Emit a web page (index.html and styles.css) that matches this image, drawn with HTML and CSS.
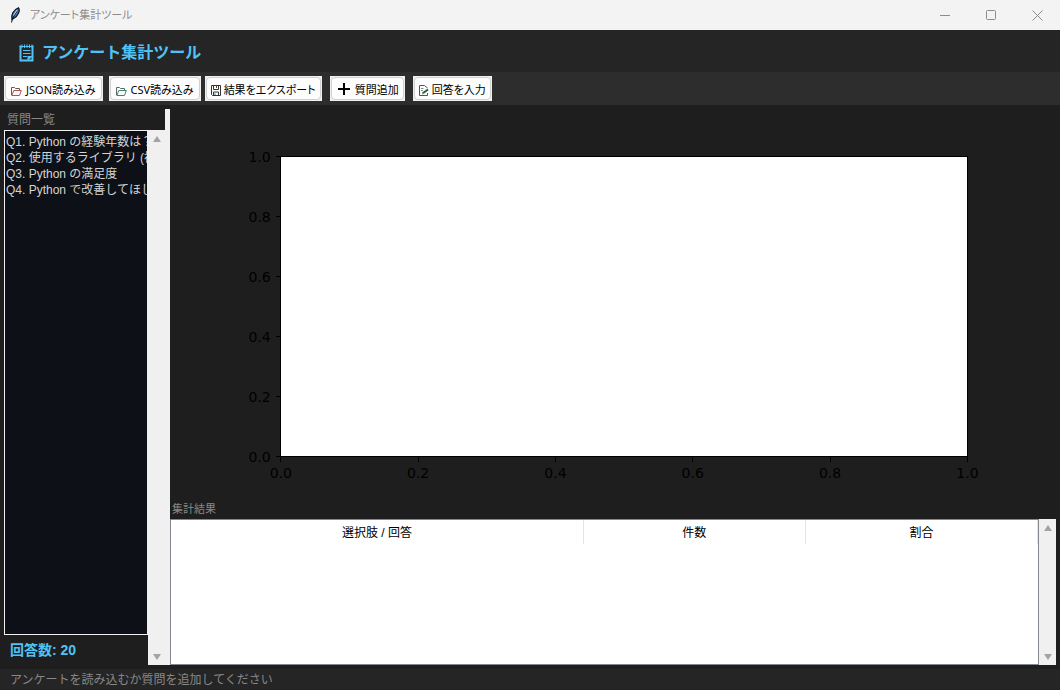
FILE: index.html
```
<!DOCTYPE html>
<html lang="ja">
  <head>
    <meta charset="UTF-8" />
    <meta name="viewport" content="width=device-width, initial-scale=1.0" />
    <title>アンケート集計ツール</title>
    <link rel="stylesheet" href="styles.css">
  </head>
  <body>
    <div class="titlebar">
        <svg class="app-icon" width="12" height="16" viewBox="0 0 12 16">
            <path d="M3 12.500C2 8 4 3 9.500 .8C11.500 3 9 9.500 4.500 11.500Z" fill="#3f7fc4" stroke="#111" stroke-width="1.2" />
            <path d="M2.500 15.500L3.500 11.500L8 4" fill="none" stroke="#111" stroke-width="1" />
            <path d="M4.500 8.500L8 3" stroke="#b9dcff" stroke-width="1" />
        </svg>
        <span class="window-title">アンケート集計ツール</span>
        <div class="window-buttons">
            <button type="button" aria-label="最小化"><svg width="11" height="11"><path d="M0 5.500H10" /></svg></button>
            <button type="button" aria-label="最大化"><svg width="11" height="11"><rect x=".5" y=".5" width="9" height="9" rx="1" /></svg></button>
            <button type="button" aria-label="閉じる"><svg width="11" height="11"><path d="M.5 .5L10.500 10.500M10.500 .5L.5 10.500" /></svg></button>
        </div>
    </div>

    <header class="header">
        <svg width="16" height="18" viewBox="0 0 16 18" fill="none" stroke="#4fc3f7">
            <path d="M2.500 1.500V16.500H14.500V1.500" stroke-width="2" />
            <path d="M1.500 2.500H15.500" stroke-width="1" />
            <path d="M4 .5V4M6.500 .5V4M9 .5V4M11.500 .5V4M14 .5V4" stroke-width="1" />
            <path d="M5 6.500H12.500M5 9.500H12.500M5 12.500H9.500" />
            <path d="M10 16V12.500H14Z" fill="#4fc3f7" />
        </svg>
        <h1>アンケート集計ツール</h1>
    </header>

    <div class="toolbar">
        <div class="group file-group">
            <button type="button" class="tool"><span>
                <svg width="11" height="10" viewBox="0 0 11 10" fill="none"><path d="M.5 9V1.500H3.500L4.500 2.500H8.500V4.500" stroke="#6a5a5a" /><path d="M.8 9.500L2.800 4.500H10.300L8.500 9.500Z" stroke="#b5504c" /></svg>
                JSON読み込み</span></button>
            <button type="button" class="tool"><span>
                <svg width="11" height="10" viewBox="0 0 11 10" fill="none"><path d="M.5 9V1.500H3.500L4.500 2.500H8.500V4.500" stroke="#5a6a66" /><path d="M.8 9.500L2.800 4.500H10.300L8.500 9.500Z" stroke="#3f8573" /></svg>
                CSV読み込み</span></button>
        </div>
        <div class="group">
            <button type="button" class="tool"><span>
                <svg width="10" height="11" viewBox="0 0 10 11" fill="none" stroke="#333"><path d="M.5 .5H9.500V10.500H1.500L.5 9.500Z" /><path d="M2.500 .5V4.500H7.500V.5M2.500 10.500V7H7.500V10.500" /><path d="M5.500 1V3" stroke="#7a3330" /><path d="M4 8.500V10" stroke="#2a6c9c" /></svg>
                結果をエクスポート</span></button>
            <button type="button" class="tool"><span>
                <svg class="plus" width="12" height="12" viewBox="0 0 12 12" stroke="#000" stroke-width="2"><path d="M6 0V12M0 6H12" /></svg>
                質問追加</span></button>
            <button type="button" class="tool"><span>
                <svg width="10" height="11" viewBox="0 0 10 11" fill="none" stroke="#555"><path d="M8.500 8V10.500H.5V.5H5.500L8.500 3" /><path d="M2 3.500H4.500M2 5.500H4" stroke="#888" /><path d="M3.500 8.500L9 4.500" stroke="#1c5e46" stroke-width="2" /><path d="M3 9L5 8.500" stroke="#c99b2e" /></svg>
                回答を入力</span></button>
        </div>
    </div>

    <main class="main">
        <section class="questions">
            <label for="question-list">質問一覧</label>
            <div class="question-body">
                <div class="question-column">
                    <select id="question-list" size="4">
                        <option>Q1. Python の経験年数は？</option>
                        <option>Q2. 使用するライブラリ (複数選択)</option>
                        <option>Q3. Python の満足度</option>
                        <option>Q4. Python で改善してほしい点</option>
                    </select>
                    <p class="count">回答数: 20</p>
                </div>
                <div class="scrollbar"><i class="up"></i><i class="down"></i></div>
            </div>
        </section>

        <div class="sash"></div>

        <section class="results">
            <svg class="chart">
                <svg class="axes" x="12.5%" y="12.2%" width="77.5%" height="77%">
                    <rect width="100%" height="100%" />
                    <svg x="0%" y="100%"><path d="M0 0V5" /><text y="21">0.0</text></svg>
                    <svg x="20%" y="100%"><path d="M0 0V5" /><text y="21">0.2</text></svg>
                    <svg x="40%" y="100%"><path d="M0 0V5" /><text y="21">0.4</text></svg>
                    <svg x="60%" y="100%"><path d="M0 0V5" /><text y="21">0.6</text></svg>
                    <svg x="80%" y="100%"><path d="M0 0V5" /><text y="21">0.8</text></svg>
                    <svg x="100%" y="100%"><path d="M0 0V5" /><text y="21">1.0</text></svg>
                    <svg class="y-tick" y="100%"><path d="M0 0H-5" /><text x="-10" y="5">0.0</text></svg>
                    <svg class="y-tick" y="80%"><path d="M0 0H-5" /><text x="-10" y="5">0.2</text></svg>
                    <svg class="y-tick" y="60%"><path d="M0 0H-5" /><text x="-10" y="5">0.4</text></svg>
                    <svg class="y-tick" y="40%"><path d="M0 0H-5" /><text x="-10" y="5">0.6</text></svg>
                    <svg class="y-tick" y="20%"><path d="M0 0H-5" /><text x="-10" y="5">0.8</text></svg>
                    <svg class="y-tick" y="0%"><path d="M0 0H-5" /><text x="-10" y="5">1.0</text></svg>
                </svg>
            </svg>
            <h2>集計結果</h2>
            <div class="table-row">
                <div class="table-box">
                    <table>
                        <thead>
                            <tr>
                                <th class="answer">選択肢 / 回答</th>
                                <th class="number">件数</th>
                                <th>割合</th>
                            </tr>
                        </thead>
                        <tbody></tbody>
                    </table>
                </div>
                <div class="scrollbar"><i class="up"></i><i class="down"></i></div>
            </div>
        </section>
    </main>

    <footer class="status">アンケートを読み込むか質問を追加してください</footer>
  </body>
</html>
```
FILE: styles.css
```
* {
    box-sizing: border-box;
}
body {
    display: flex;
    flex-direction: column;
    height: 100vh;
    margin: 0;
    background: #1e1e1e;
    font-family: "Liberation Sans", "Noto Sans CJK JP", sans-serif;
    font-size: 12px;
}
h1, h2, p {
    margin: 0;
}
button {
    padding: 0;
    border: none;
    font-family: "Noto Sans", "Noto Sans CJK JP", sans-serif;
    font-size: 11px;
}

/* タイトルバー */
.titlebar {
    display: flex;
    align-items: center;
    height: 30px;
    padding-left: 9px;
    background: #f3f3f3;
    color: #8c8c8c;
}
.window-title {
    margin-left: 9px;
    font-size: 11px;
    line-height: 16px;
    font-feature-settings: "palt";
}
.window-buttons {
    display: flex;
    margin-left: auto;
}
.window-buttons button {
    display: flex;
    align-items: center;
    justify-content: center;
    width: 46px;
    height: 30px;
    background: none;
}
.window-buttons svg {
    fill: none;
    stroke: #8c8c8c;
}

/* ヘッダー */
.header {
    display: flex;
    align-items: center;
    column-gap: 8px;
    height: 42px;
    padding: 4px 18px 0;
    background: #252526;
}
.header h1 {
    color: #4fc3f7;
    font-size: 16px;
    line-height: 24px;
}

/* ツールバー */
.toolbar {
    display: flex;
    column-gap: 4px;
    height: 33px;
    padding: 4px;
    background: #2d2d2d;
}
.group {
    display: flex;
    column-gap: 8px;
}
.file-group {
    column-gap: 6px;
}
.tool {
    height: 25px;
    padding: 1px;
    background: #f0f0f0;
    color: #000;
    font-feature-settings: "palt";
}
.tool span {
    display: flex;
    align-items: center;
    column-gap: 3px;
    height: 23px;
    padding: 0 4px;
    border: 1px solid #d0d0d0;
    border-radius: 4px;
    background: #fdfdfd;
    white-space: nowrap;
}
.file-group span {
    column-gap: 4px;
    padding: 0 5px;
}
.tool svg {
    margin-top: 4px;
}
.tool .plus {
    margin: 0 2px;
}

.main {
    display: flex;
    flex: 1;
    min-height: 0;
    padding: 4px;
}

/* 質問一覧 */
.questions {
    display: flex;
    flex-direction: column;
    width: 161px;
}
.questions label {
    height: 21px;
    padding: 1px 0 0 3px;
    color: #888;
    line-height: 21px;
}
.question-body {
    display: flex;
    flex: 1;
}
.question-column {
    display: flex;
    flex: 1;
    flex-direction: column;
    min-width: 0;
}
.question-column select {
    flex: 1;
    width: 100%;
    padding: 1px 0 0;
    overflow: hidden;
    border: 1px solid #f0f0f0;
    border-radius: 0;
    outline: none;
    background: #0d1117;
    color: #d4d4d4;
    font-family: inherit;
    font-size: 12px;
}
.question-column option {
    height: 16px;
    min-height: 16px;
    padding: 0 1px;
    line-height: 16px;
}
.count {
    height: 30px;
    padding-left: 6px;
    color: #4fc3f7;
    font-size: 14px;
    font-weight: bold;
    line-height: 30px;
}
.scrollbar {
    display: flex;
    flex-direction: column;
    justify-content: space-between;
    align-items: center;
    width: 17px;
    padding: 6px 0 5px;
    background: #f0f0f0;
}
.up, .down {
    border: 4px solid transparent;
}
.up {
    border-top: none;
    border-bottom: 6px solid #a3a3a3;
}
.down {
    border-bottom: none;
    border-top: 6px solid #a3a3a3;
}
.sash {
    width: 5px;
    background: #f0f0f0;
}

/* 集計結果 */
.results {
    display: flex;
    flex: 1;
    flex-direction: column;
    min-width: 0;
}
.chart {
    flex: 1;
    width: 100%;
    min-height: 0;
}
.axes, .axes svg {
    overflow: visible;
}
.axes rect {
    fill: #fff;
    stroke: #000;
    shape-rendering: crispEdges;
}
.axes path {
    stroke: #000;
    shape-rendering: crispEdges;
}
.axes text {
    font-family: "DejaVu Sans", sans-serif;
    font-size: 14px;
    text-anchor: middle;
}
.axes .y-tick text {
    text-anchor: end;
}
.results h2 {
    height: 20px;
    padding-left: 2px;
    color: #888;
    font-size: 11px;
    font-weight: normal;
    line-height: 20px;
}
.table-row {
    display: flex;
    height: 146px;
}
.table-box {
    flex: 1;
    border: 1px solid #828790;
    background: #fff;
}
table {
    width: 100%;
    border-collapse: collapse;
    table-layout: fixed;
}
th {
    height: 24px;
    padding: 0 0 2px;
    border-right: 1px solid #e5e5e5;
    font-weight: normal;
}
.answer {
    width: 47.6%;
}
.number {
    width: 25.6%;
}

.status {
    height: 21px;
    padding-left: 10px;
    border-bottom: 1px solid #2b1d22;
    background: #252526;
    color: #888;
    line-height: 22px;
}
```
